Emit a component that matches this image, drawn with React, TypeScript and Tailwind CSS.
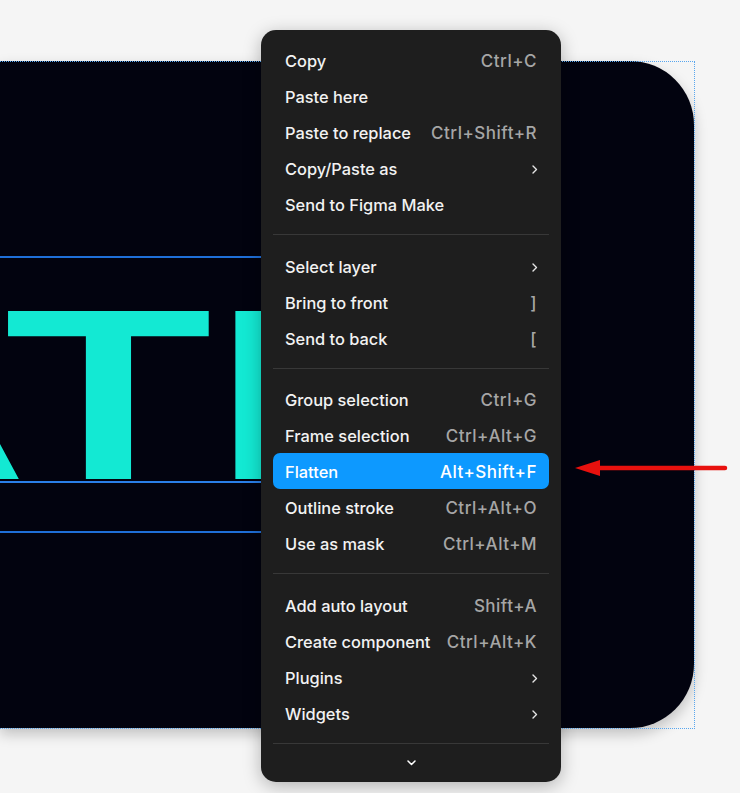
import React from "react";

type Item = { label: string; shortcut?: string; submenu?: boolean; active?: boolean };

const sections: Item[][] = [
  [
    { label: "Copy", shortcut: "Ctrl+C" },
    { label: "Paste here" },
    { label: "Paste to replace", shortcut: "Ctrl+Shift+R" },
    { label: "Copy/Paste as", submenu: true },
    { label: "Send to Figma Make" },
  ],
  [
    { label: "Select layer", submenu: true },
    { label: "Bring to front", shortcut: "]" },
    { label: "Send to back", shortcut: "[" },
  ],
  [
    { label: "Group selection", shortcut: "Ctrl+G" },
    { label: "Frame selection", shortcut: "Ctrl+Alt+G" },
    { label: "Flatten", shortcut: "Alt+Shift+F", active: true },
    { label: "Outline stroke", shortcut: "Ctrl+Alt+O" },
    { label: "Use as mask", shortcut: "Ctrl+Alt+M" },
  ],
  [
    { label: "Add auto layout", shortcut: "Shift+A" },
    { label: "Create component", shortcut: "Ctrl+Alt+K" },
    { label: "Plugins", submenu: true },
    { label: "Widgets", submenu: true },
  ],
];

const separatorHeights = ["h-[26px]", "h-[25px]", "h-[26px]"];

const ChevronRight = () => (
  <svg width="6" height="9" viewBox="0 0 6 9" fill="none" className="mr-[-1px]">
    <polyline points="1,1 4.5,4.5 1,8" stroke="currentColor" strokeWidth="1.4" strokeLinecap="round" strokeLinejoin="round" />
  </svg>
);

const ChevronDown = () => (
  <svg width="9" height="6" viewBox="0 0 9 6" fill="none">
    <polyline points="1,1 4.5,4.5 8,1" stroke="#ffffff" strokeWidth="1.5" strokeLinecap="round" strokeLinejoin="round" />
  </svg>
);

function Row({ item }: { item: Item }) {
  return (
    <div
      className={
        item.active
          ? "flex h-9 items-center justify-between rounded-[7px] bg-[#0d99ff] px-3 pt-[3px] text-white"
          : "flex h-9 items-center justify-between rounded-[7px] px-3 pt-[3px] text-[#f2f2f2]"
      }
    >
      <span className="text-[16.4px]">{item.label}</span>
      {item.shortcut && (
        <span className={item.active ? "text-[17px] tracking-[0.5px] text-white" : "text-[17px] tracking-[0.5px] text-[#a6a6a6]"}>
          {item.shortcut}
        </span>
      )}
      {item.submenu && (
        <span className="text-[#e6e6e6]">
          <ChevronRight />
        </span>
      )}
    </div>
  );
}

function Separator({ h }: { h: string }) {
  return (
    <div className={`flex flex-col ${h}`}>
      <div className="mt-3 h-px bg-[#383838]" />
    </div>
  );
}

export default function App() {
  return (
    <div className="relative h-[793px] w-[740px] overflow-hidden bg-[#f5f5f5] font-['Inter','Liberation_Sans',sans-serif]">
      {/* Frame on the canvas */}
      <div className="absolute left-0 top-[61px] h-[667px] w-[694px] overflow-hidden rounded-r-[64px] bg-[#02030f] shadow-[0_6px_14px_rgba(0,0,0,0.22)]">
        {/* Big heading letters */}
        <div className="absolute left-0 top-0 h-full w-[560px] text-[#13e9d3]">
          <span className="absolute left-[-225px] top-[219px] origin-top-left scale-x-[1.5] text-[231px] font-semibold leading-none">A</span>
          <span className="absolute left-[-6px] top-[219px] origin-top-left scale-x-[1.5] text-[231px] font-semibold leading-none">T</span>
          <span className="absolute left-[210px] top-[219px] origin-top-left scale-x-[1.5] text-[231px] font-semibold leading-none">I</span>
        </div>
        {/* Text box guides */}
        <div className="absolute left-0 top-[195px] h-[2px] w-[520px] bg-[#1f6fd8]" />
        <div className="absolute left-0 top-[420px] h-[2px] w-[520px] bg-[#2a7fe8]" />
        <div className="absolute left-0 top-[470px] h-[2px] w-[520px] bg-[#1f6fd8]" />
      </div>
      {/* Selection outline */}
      <div className="pointer-events-none absolute left-[-2px] top-[61px] h-[668px] w-[697px] border border-dotted border-[#58a6ee]" />

      {/* Annotation arrow */}
      <svg className="absolute left-[570px] top-[455px]" width="160" height="26" viewBox="0 0 160 26">
        <line x1="28" y1="13" x2="155" y2="13" stroke="#e8110e" strokeWidth="4.5" strokeLinecap="round" />
        <polygon points="5,13 30,5 30,21" fill="#e8110e" />
      </svg>

      {/* Context menu */}
      <div className="absolute left-[261px] top-[30px] flex w-[300px] flex-col rounded-[15px] bg-[#1e1e1e] px-3 pt-3 font-[450] shadow-[0_4px_18px_rgba(0,0,0,0.28)]">
        {sections.map((group, i) => (
          <React.Fragment key={i}>
            {group.map((it) => (
              <Row key={it.label} item={it} />
            ))}
            {i < separatorHeights.length && <Separator h={separatorHeights[i]} />}
          </React.Fragment>
        ))}
        <div className="mt-3 h-px bg-[#383838]" />
        <div className="flex h-[38px] items-center justify-center">
          <ChevronDown />
        </div>
      </div>
    </div>
  );
}
